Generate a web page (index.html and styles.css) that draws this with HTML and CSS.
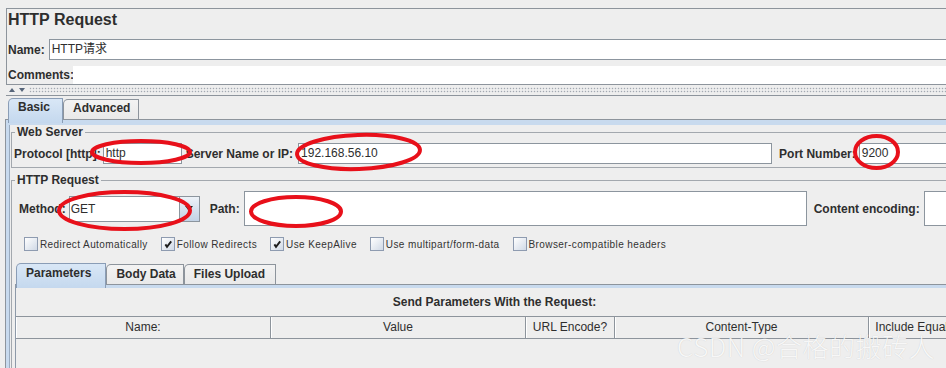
FILE: index.html
```html
<!DOCTYPE html>
<html>
<head>
<meta charset="utf-8">
<link rel="stylesheet" href="styles.css">
</head>
<body>
<div class="app">
  <div class="head">
    <div class="title">HTTP Request</div>
    <div class="name-row">
      <span class="lbl">Name:</span>
      <div class="input name-input">HTTP请求</div>
    </div>
    <div class="comments-row">
      <span class="lbl comments-lbl">Comments:</span>
      <div class="comments-input"></div>
    </div>
  </div>
  <div class="splitter"><span class="arr up"></span><span class="arr down"></span><span class="dots"></span></div>
  <div class="tabs">
    <div class="tab active">Basic</div>
    <div class="tab">Advanced</div>
  </div>
  <div class="tabpanel">
    <div class="tabbody">
      <fieldset class="group web">
        <legend>Web Server</legend>
        <div class="row web-row">
          <span class="lbl">Protocol [http]:</span>
          <div class="input proto">http</div>
          <span class="lbl server-lbl">Server Name or IP:</span>
          <div class="input server">192.168.56.10</div>
          <span class="lbl port-lbl">Port Number:</span>
          <div class="input port">9200</div>
        </div>
      </fieldset>
      <fieldset class="group req">
        <legend>HTTP Request</legend>
        <div class="row method-row">
          <span class="lbl">Method:</span>
          <div class="combo"><span class="combo-val">GET</span><span class="combo-btn"></span></div>
          <span class="lbl path-lbl">Path:</span>
          <div class="input path"></div>
          <span class="lbl enc-lbl">Content encoding:</span>
          <div class="input enc"></div>
        </div>
        <div class="checks">
          <div class="check"><span class="box"></span>Redirect Automatically</div>
          <div class="check"><span class="box"><svg viewBox="0 0 12 12" width="12" height="12"><path d="M3.4 6.4 L5 8.8 L9.2 3.4" fill="none" stroke="#1e1e1e" stroke-width="1.9"/></svg></span>Follow Redirects</div>
          <div class="check"><span class="box"><svg viewBox="0 0 12 12" width="12" height="12"><path d="M3.4 6.4 L5 8.8 L9.2 3.4" fill="none" stroke="#1e1e1e" stroke-width="1.9"/></svg></span>Use KeepAlive</div>
          <div class="check"><span class="box"></span>Use multipart/form-data</div>
          <div class="check"><span class="box"></span>Browser-compatible headers</div>
        </div>
        <div class="subtabs">
          <div class="subtab active">Parameters</div>
          <div class="subtab body-tab">Body Data</div>
          <div class="subtab files-tab">Files Upload</div>
        </div>
        <div class="subpanel">
          <div class="caption">Send Parameters With the Request:</div>
          <div class="thead">
            <div class="th c-name">Name:</div>
            <div class="th c-val">Value</div>
            <div class="th c-url">URL Encode?</div>
            <div class="th c-ct">Content-Type</div>
            <div class="th c-eq">Include Equals?</div>
          </div>
        </div>
      </fieldset>
    </div>
  </div>
</div>
<svg class="marks" width="946" height="368" viewBox="0 0 946 368">
  <ellipse cx="141" cy="152" rx="49" ry="11" />
  <ellipse cx="358.5" cy="152" rx="61.5" ry="17" transform="rotate(-2 358.5 152)" />
  <ellipse cx="876.5" cy="152" rx="21.5" ry="16" />
  <ellipse cx="124.5" cy="210.5" rx="65.5" ry="18.5" />
  <ellipse cx="296" cy="211.5" rx="45" ry="14.5" />
</svg>
<div class="watermark">CSDN @合格的搬砖人</div>
</body>
</html>
```
FILE: styles.css
```css
* { box-sizing: border-box; }
html, body { margin: 0; padding: 0; }
body {
  width: 946px;
  height: 368px;
  overflow: hidden;
  position: relative;
  background: #eeeeee;
  font-family: "Liberation Sans", Arial, "Noto Sans CJK SC", sans-serif;
  font-size: 12px;
  color: #2e2e2e;
}
.app { width: 974px; padding-top: 8px; }

/* header panel */
.head {
  margin-left: 6px;
  border: 1px solid #8d949c;
  border-right: none;
}
.title {
  height: 28px;
  padding-left: 1px;
  font-size: 16px;
  font-weight: bold;
  line-height: 22px;
}
.lbl { font-weight: bold; white-space: nowrap; flex: none; }
.name-row {
  height: 25px;
  display: flex;
  align-items: center;
  padding-left: 1px;
  gap: 4px;
}
.input {
  height: 21px;
  background: #fff;
  border: 1px solid #8c959e;
  line-height: 19px;
  padding-left: 2px;
  white-space: nowrap;
  flex: none;
}
.name-input { flex: 1; }
.comments-row {
  height: 22px;
  display: flex;
  align-items: flex-end;
  padding-left: 1px;
}
.comments-lbl { width: 65px; line-height: 18px; }
.comments-input { flex: 1; height: 18px; background: #fff; }

/* splitter */
.splitter {
  margin-left: 6px;
  height: 11px;
  border-bottom: 1px solid #8d949c;
  display: flex;
  align-items: center;
  gap: 4px;
  padding-left: 3px;
}
.arr {
  width: 0; height: 0;
  border-left: 3.5px solid transparent;
  border-right: 3.5px solid transparent;
}
.up { border-bottom: 4px solid #56657a; }
.down { border-top: 4px solid #56657a; }
.dots {
  flex: 1;
  height: 6px;
  background-image: radial-gradient(circle, #a3a9b1 0.75px, transparent 1.05px);
  background-size: 3px 3px;
}

/* main tabs */
.tabs {
  height: 23px;
  display: flex;
  align-items: flex-end;
  padding-left: 8px;
}
.tab, .subtab {
  height: 20px;
  padding: 0 9px;
  border: 1px solid #8d949c;
  border-bottom: none;
  border-radius: 5px 0 0 0;
  font-weight: bold;
  line-height: 17px;
  background: linear-gradient(#f3f3f3, #e9e9e9);
  white-space: nowrap;
}
.tab.active, .subtab.active {
  height: 25px;
  margin-bottom: -4px;
  position: relative;
  z-index: 1;
  background: linear-gradient(#d9e7f6, #c4d8ee);
  border-color: #8a9db6;
  padding-right: 12px;
}
.tab + .tab { padding-right: 8px; }
.tabpanel {
  margin-left: 5px;
  border-top: 1px solid #8d949c;
  border-left: 1px solid #8d949c;
  padding: 3px 0 0 3px;
  background: #c8daee;
}
.tabbody {
  background: #eeeeee;
  border-left: 1px solid #9aabbf;
  padding-left: 1px;
  height: 250px;
}

/* fieldsets */
.group {
  margin: 0;
  border: 1px solid #a3a8ae;
  padding: 4px 0 3px 3px;
  min-width: 0;
}
.group legend {
  padding: 0 2px;
  font-weight: bold;
  line-height: 14px;
}
.web { margin-top: 2px; }
.req { margin-top: 5px; }
.row { display: flex; align-items: center; }
.web-row { height: 21px; margin-left: -1px; }
.proto { width: 79px; margin-left: 2px; }
.server-lbl { margin-left: 4px; }
.server { width: 474px; margin-left: 5px; }
.port-lbl { margin-left: 7px; }
.port { flex: 1; margin-left: 3px; }

.method-row { height: 35px; margin-left: 4px; }
.combo {
  width: 131px;
  height: 26px;
  margin-left: 3px;
  display: flex;
  border: 1px solid #8c959e;
  background: #fff;
  flex: none;
}
.combo-val { flex: 1; padding-left: 1px; line-height: 24px; }
.combo-btn {
  width: 20px;
  border-left: 1px solid #8c959e;
  background: linear-gradient(#edf2f8, #c2d2e5);
  display: flex;
  align-items: center;
  justify-content: center;
}
.combo-btn::after {
  content: "";
  border-left: 4px solid transparent;
  border-right: 4px solid transparent;
  border-top: 5px solid #222;
}
.path-lbl { margin-left: 10px; }
.path { width: 563px; height: 35px; margin-left: 4px; }
.enc-lbl { margin-left: 7px; }
.enc { flex: 1; height: 35px; margin-left: 4px; }

/* checkboxes */
.checks {
  display: flex;
  gap: 13px;
  margin: 11px 0 0 9px;
  height: 14px;
  align-items: center;
  font-size: 10px;
  letter-spacing: 0.4px;
  color: #333;
}
.check { display: flex; align-items: center; gap: 2px; white-space: nowrap; }
.box {
  width: 14px;
  height: 14px;
  border: 1px solid #8e9bb0;
  background: linear-gradient(135deg, #ffffff, #d0d9e6);
  display: flex;
  align-items: center;
  justify-content: center;
}

/* parameter tabs */
.subtabs {
  display: flex;
  align-items: flex-end;
  height: 21px;
  margin-top: 12px;
}
.subtab { line-height: 19px; }
.subtab.active { margin-left: 1px; padding-right: 14px; }
.body-tab { padding-right: 7px; }
.files-tab { padding-right: 10px; }
.subpanel {
  border-top: 1px solid #8d949c;
  border-left: 1px solid #8d99a8;
  box-shadow: inset 0 3px 0 #c8daee;
  padding-top: 3px;
  height: 100px;
  overflow: hidden;
}
.caption {
  text-align: center;
  font-weight: bold;
  line-height: 16px;
  margin-top: 6px;
}
.thead {
  display: flex;
  margin-top: 6px;
  border-top: 1px solid #8d949c;
  border-bottom: 1px solid #8d949c;
  height: 23px;
}
.th {
  flex: none;
  border-right: 1px solid #8d949c;
  text-align: center;
  line-height: 21px;
  box-shadow: inset 1px 0 0 #ffffff;
  white-space: nowrap;
  overflow: hidden;
}
.c-name { width: 255px; }
.c-val { width: 255px; }
.c-url { width: 89px; }
.c-ct { width: 254px; }
.c-eq { width: 99px; }

/* overlays */
.marks {
  position: absolute;
  left: 0;
  top: 0;
  pointer-events: none;
}
.marks ellipse {
  fill: none;
  stroke: #e8101a;
  stroke-width: 4;
}
.watermark {
  position: absolute;
  left: 677px;
  top: 327px;
  font-family: "Noto Sans CJK SC", sans-serif;
  font-size: 26px;
  font-weight: 300;
  color: rgba(255, 255, 255, 0.85);
  letter-spacing: 0.5px;
  white-space: nowrap;
  text-shadow: 0 0 1px rgba(0, 0, 0, 0.16);
}
```
